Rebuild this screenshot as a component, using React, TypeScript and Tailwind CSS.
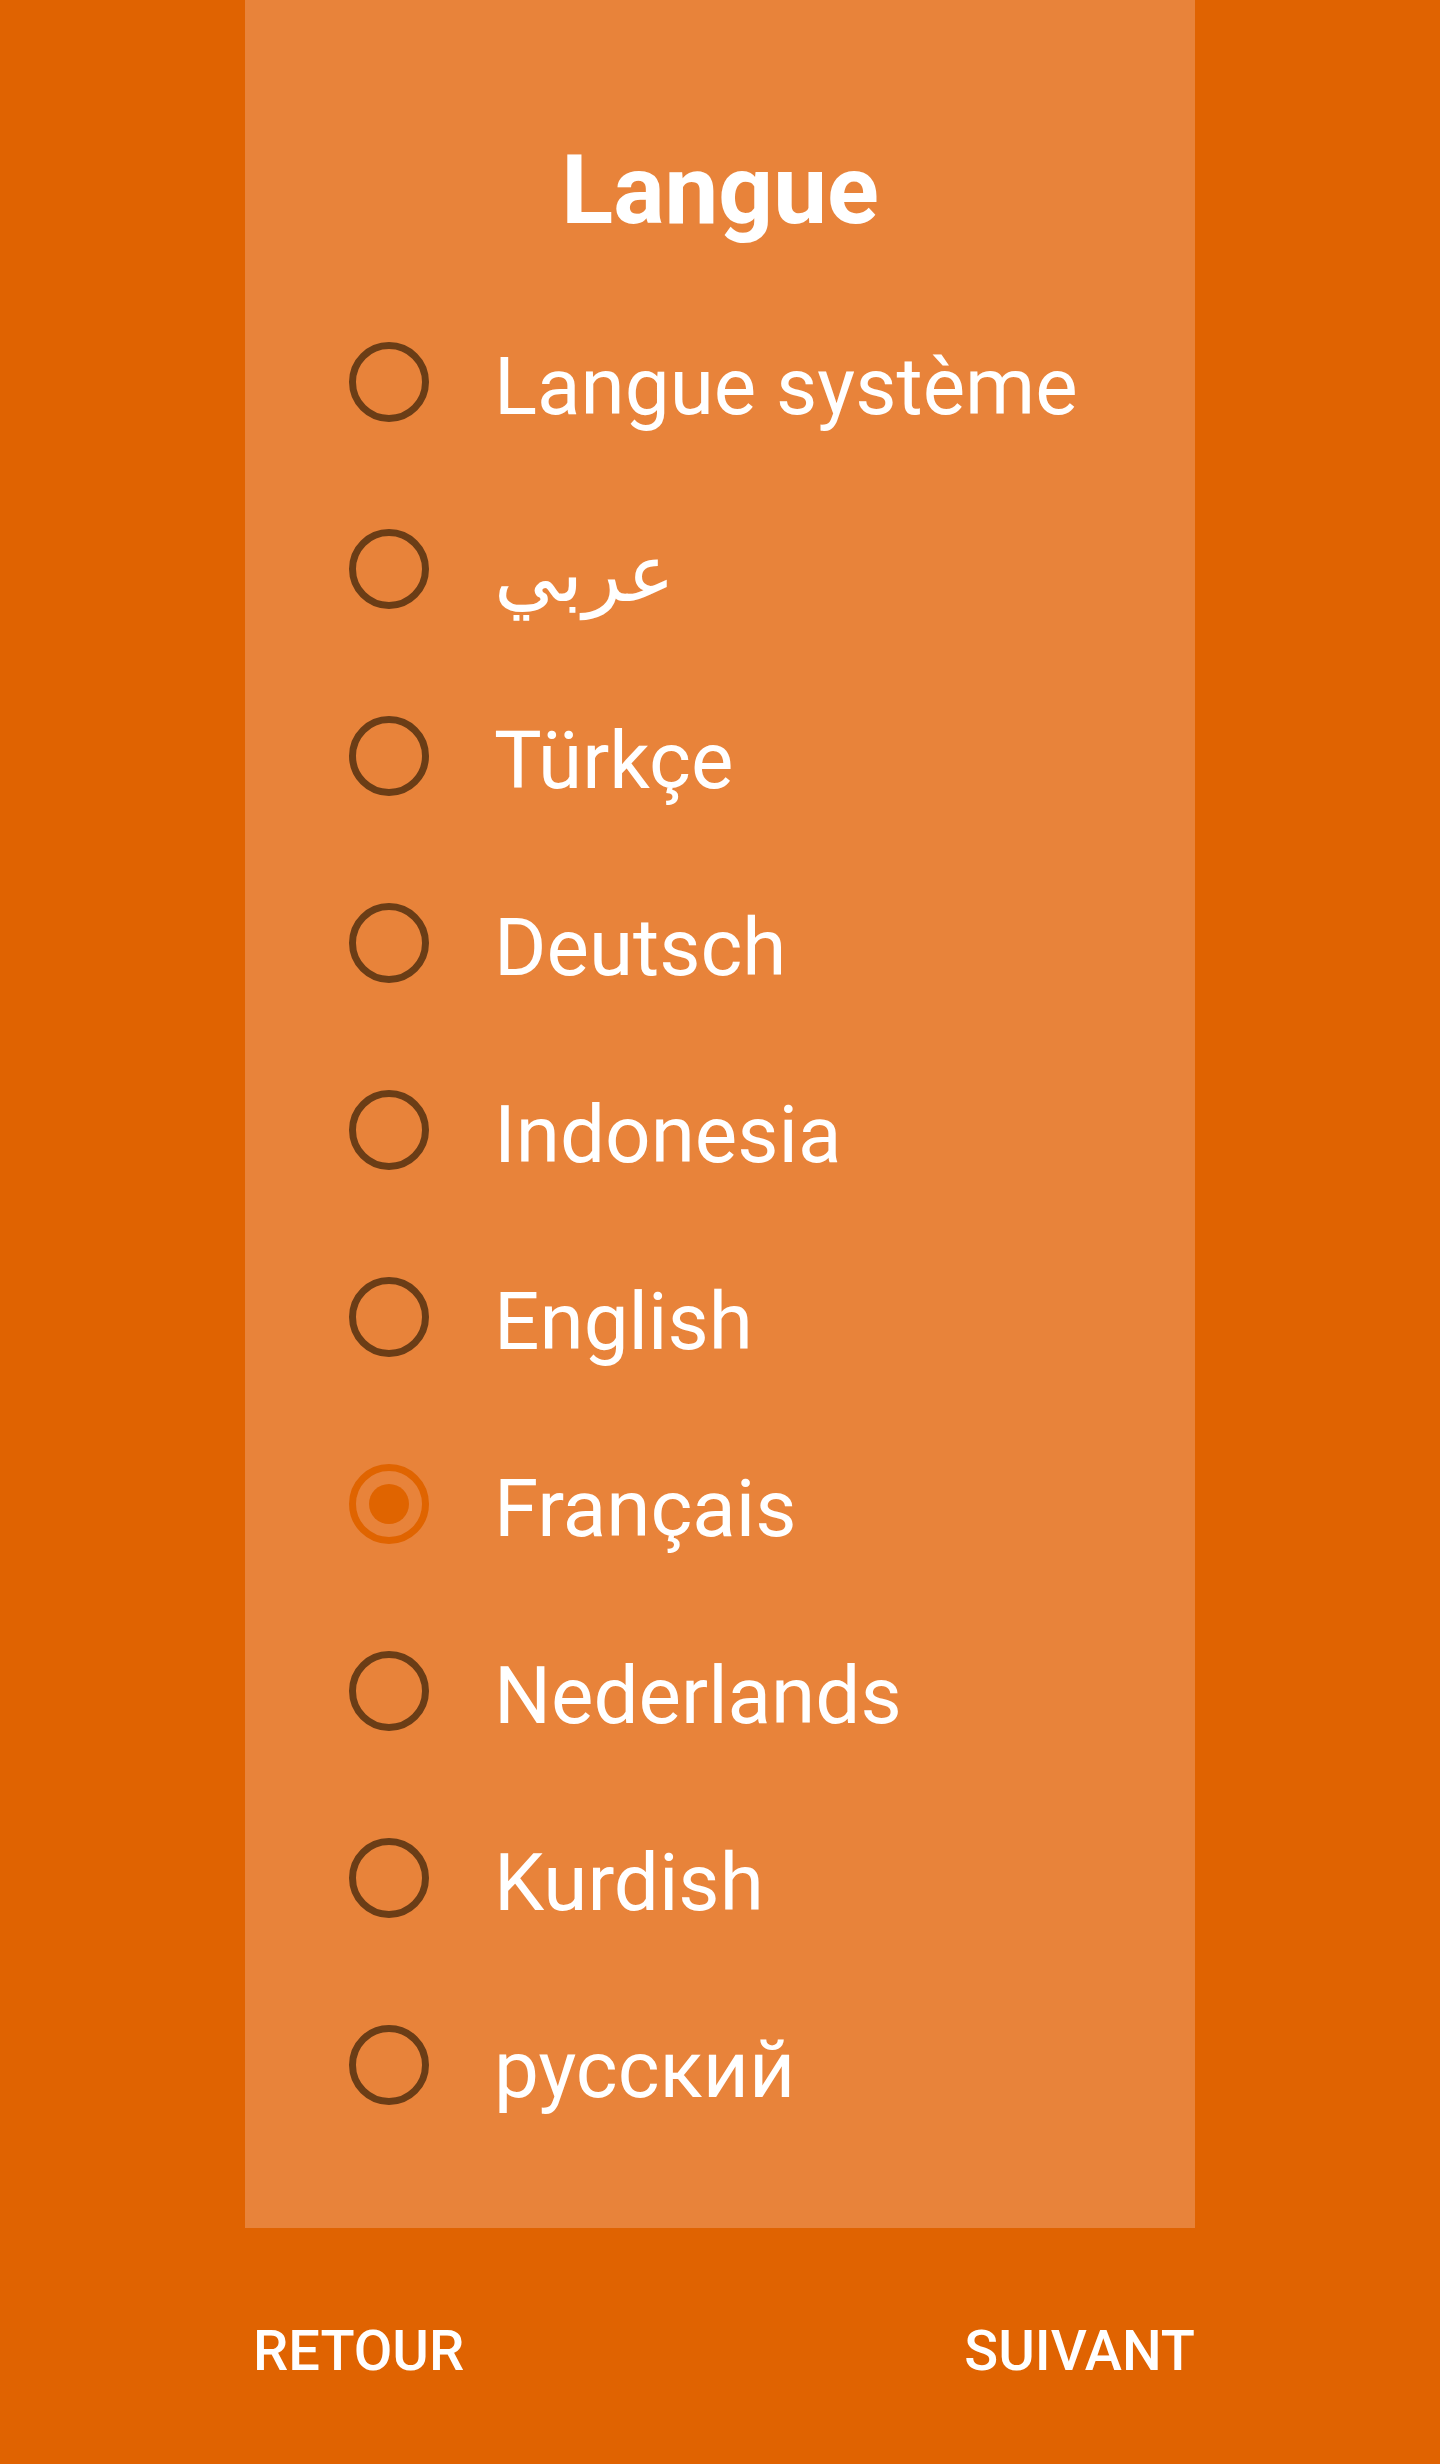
import React, { useState } from 'react'

const langs = [
    'Langue système',
    'عربي',
    'Türkçe',
    'Deutsch',
    'Indonesia',
    'English',
    'Français',
    'Nederlands',
    'Kurdish',
    'русский',
]

function Radio({ checked }: { checked: boolean }) {
    if (checked) {
        return (
            <div className='w-[80px] h-[80px] rounded-full border-[7px] border-[#e06400] flex items-center justify-center shrink-0'>
                <div className='w-[40px] h-[40px] rounded-full bg-[#e06400]'></div>
            </div>
        )
    }
    return <div className='w-[80px] h-[80px] rounded-full border-[7px] border-[#6b3d16] shrink-0'></div>
}

function App() {
    const [selected, setSelected] = useState('Français')

    return (
        <div className='w-[1440px] h-[2464px] bg-[#e06301] font-["Roboto",sans-serif] text-white flex flex-col'>
            <div className='w-[950px] h-[2228px] mx-auto bg-[#e8833a] flex flex-col'>
                <h1 className='pt-[134px] h-[246px] leading-[112px] text-[96px] font-bold text-center mb-[42px]'>Langue</h1>
                <div className='flex flex-col pl-[104px]'>
                    {langs.map((l) => (
                        <div
                            key={l}
                            className='h-[187px] flex items-center gap-[65px] cursor-pointer'
                            onClick={() => setSelected(l)}
                        >
                            <Radio checked={selected === l} />
                            <span className='pt-[10px] text-[80px] leading-none font-["Roboto","DejaVu_Sans",sans-serif]'>{l}</span>
                        </div>
                    ))}
                </div>
            </div>
            <div className='w-[950px] mx-auto flex-1 flex items-center justify-between pl-[8px] pt-[10px]'>
                <button className='text-[56px] font-medium tracking-normal'>RETOUR</button>
                <button className='text-[56px] font-medium tracking-normal'>SUIVANT</button>
            </div>
        </div>
    )
}

export default App
